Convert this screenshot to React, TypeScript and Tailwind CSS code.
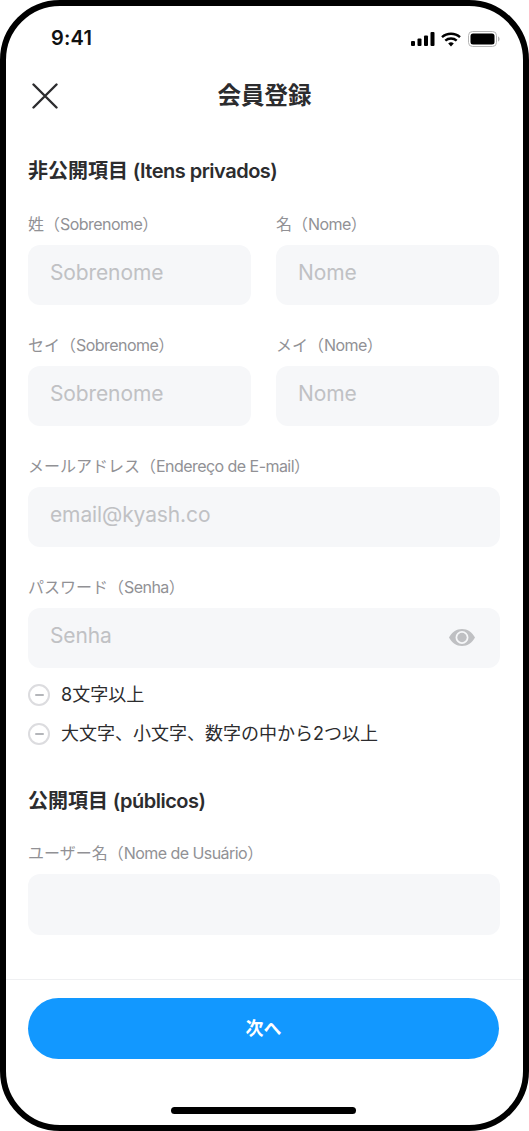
import React from 'react';

function Latin({ children }: { children: React.ReactNode }) {
  return <span className="tracking-[-0.55px]">{children}</span>;
}

function Field({ jp, latin, placeholder, children }: { jp: string; latin: string; placeholder?: string; children?: React.ReactNode }) {
  return (
    <div className="flex-1 min-w-0">
      <div className="h-[20px] flex items-center text-[16px] leading-[20px] text-[#919195] whitespace-nowrap">
        <span>{jp}（<Latin>{latin}</Latin>）</span>
      </div>
      <div className="mt-[11px] h-[60.5px] rounded-[12px] bg-[#f6f7f9] pl-[22px] pr-[25px] flex items-center justify-between">
        <span className="text-[21px] leading-[24px] tracking-[-0.12px] text-[#c0c1c4] -mt-[4px]">{placeholder}</span>
        {children}
      </div>
    </div>
  );
}

function Rule({ children }: { children: React.ReactNode }) {
  return (
    <div className="flex items-center gap-[11px] h-[22px]">
      <span className="w-[22px] h-[22px] rounded-full border-2 border-[#dcdcdf] flex items-center justify-center">
        <span className="w-[9px] h-[2px] rounded-full bg-[#b4b6ba]" />
      </span>
      <span className="text-[18px] leading-[22px] text-[#2c2c2e]">{children}</span>
    </div>
  );
}

export default function App() {
  return (
    <div className="w-[529px] h-[1131px] bg-white overflow-hidden font-['Inter','Noto_Sans_CJK_JP',sans-serif]">
      <div className="relative h-full border-[6px] border-black rounded-[60px] flex flex-col bg-white overflow-hidden">
        {/* status bar */}
        <div className="h-[58px] pt-[19px] pl-[45px] pr-[23px] flex items-start justify-between">
          <span className="text-[20px] leading-[26px] font-semibold text-[#111] tracking-[0.2px]">9:41</span>
          <div className="flex items-center gap-[6px] mt-[6px]">
            <svg width="24" height="14" viewBox="0 0 24 14" fill="#000">
              <rect x="0" y="9" width="4" height="5" rx="1" />
              <rect x="6.5" y="6.5" width="4" height="7.5" rx="1" />
              <rect x="13" y="3.5" width="4" height="10.5" rx="1" />
              <rect x="19.5" y="0" width="4" height="14" rx="1" />
            </svg>
            <svg width="20" height="15" viewBox="0 0 20 15" fill="none" stroke="#000" strokeWidth="2.4">
              <path d="M1 5.2C6 .6 14 .6 19 5.2" />
              <path d="M4.3 8.6c3.2-2.9 8.2-2.9 11.4 0" />
              <path d="M10 14.6l-2.8-3a4 4 0 0 1 5.6 0z" fill="#000" stroke="none" />
            </svg>
            <svg width="32" height="16" viewBox="0 0 32 16" className="ml-[1px]">
              <rect x="0.5" y="0.5" width="28" height="15" rx="4" fill="none" stroke="#b5b5b5" />
              <rect x="2.5" y="2.5" width="24" height="11" rx="2.5" fill="#000" />
              <path d="M30 5.5c1 .3 1.6 1.3 1.6 2.5s-.6 2.2-1.6 2.5z" fill="#b5b5b5" />
            </svg>
          </div>
        </div>

        {/* nav */}
        <div className="relative mt-[10px] h-[44px] flex items-center justify-center">
          <svg width="26" height="26" viewBox="0 0 26 26" fill="none" stroke="#2c2c2e" strokeWidth="2.4" strokeLinecap="round" className="absolute left-[26px] top-[9px]">
            <path d="M1.5 1.5l23 23M24.5 1.5l-23 23" />
          </svg>
          <span className="text-[23.5px] leading-[30px] font-bold text-[#2c2c2e] -mt-[1px]">会員登録</span>
        </div>

        {/* form */}
        <div className="flex-1 pl-[22px] pr-[23px] pt-[38px]">
          <h2 className="h-[30px] flex items-center text-[20px] font-bold text-[#2c2c2e] whitespace-pre">
            非公開項目 <span className="font-semibold tracking-[-0.5px]">(Itens privados)</span>
          </h2>
          <div className="mt-[27.5px] flex gap-[25px] pr-[1px]">
            <Field jp="姓" latin="Sobrenome" placeholder="Sobrenome" />
            <Field jp="名" latin="Nome" placeholder="Nome" />
          </div>
          <div className="mt-[29.5px] flex gap-[25px] pr-[1px]">
            <Field jp="セイ" latin="Sobrenome" placeholder="Sobrenome" />
            <Field jp="メイ" latin="Nome" placeholder="Nome" />
          </div>
          <div className="mt-[29.5px]">
            <Field jp="メールアドレス" latin="Endereço de E-mail" placeholder="email@kyash.co" />
          </div>
          <div className="mt-[29.5px]">
            <Field jp="パスワード" latin="Senha" placeholder="Senha">
              <svg width="26" height="17" viewBox="0 0 26 17" fill="#bfc0c3">
                <path fillRule="evenodd" d="M13 0C7.5 0 2.7 3.3 0 8.5 2.7 13.7 7.5 17 13 17s10.3-3.3 13-8.5C23.3 3.3 18.5 0 13 0zm0 15a6.5 6.5 0 1 1 0-13 6.5 6.5 0 0 1 0 13z" />
                <circle cx="13" cy="8.5" r="4.7" />
              </svg>
            </Field>
          </div>
          <div className="mt-[15.5px] flex flex-col gap-[17px]">
            <Rule>8文字以上</Rule>
            <Rule>大文字、小文字、数字の中から2つ以上</Rule>
          </div>
          <h2 className="mt-[41.5px] h-[30px] flex items-center text-[20px] font-bold text-[#2c2c2e] whitespace-pre">
            公開項目 <span className="font-semibold tracking-[-0.5px]">(públicos)</span>
          </h2>
          <div className="mt-[27px]">
            <Field jp="ユーザー名" latin="Nome de Usuário" />
          </div>
        </div>

        {/* footer */}
        <div className="border-t border-[#eff0f2] pl-[22px] pr-[24px] pt-[18px] h-[146px] flex flex-col">
          <button className="h-[61px] w-full rounded-full bg-[#1298ff] text-white text-[18px] font-semibold">次へ</button>
          <div className="mt-[48px] self-center w-[185px] h-[7px] rounded-full bg-black" />
        </div>
      </div>
    </div>
  );
}
